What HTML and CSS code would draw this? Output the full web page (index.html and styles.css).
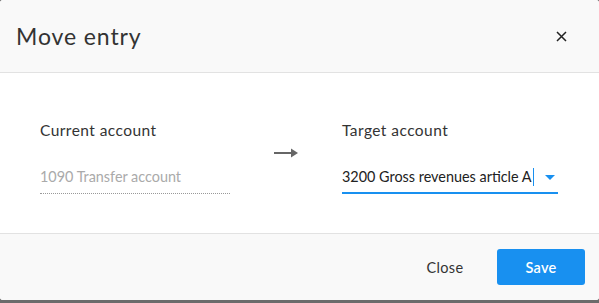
FILE: index.html
```html
<!DOCTYPE html>
<html>
<head>
<meta charset="utf-8">
<link rel="stylesheet" href="styles.css">
</head>
<body>
<div class="dialog">
  <div class="header">
    <div class="title">Move entry</div>
    <button class="close-x" aria-label="Close">
      <svg width="11" height="11" viewBox="0 0 11 11"><path d="M1 1L10 10M10 1L1 10" stroke="#222" stroke-width="1.5" fill="none"/></svg>
    </button>
  </div>
  <div class="body">
    <div class="col col-left">
      <div class="label">Current account</div>
      <div class="value readonly">1090 Transfer account</div>
    </div>
    <div class="arrow">
      <svg width="24" height="10" viewBox="0 0 24 10"><path d="M0 5H18" stroke="#666" stroke-width="2"/><path d="M17 0.5L24 5L17 9.5Z" fill="#666"/></svg>
    </div>
    <div class="col col-right">
      <div class="label">Target account</div>
      <div class="value select"><span class="text">3200 Gross revenues article A</span><span class="caret"></span><span class="tri"></span></div>
    </div>
  </div>
  <div class="footer">
    <button class="btn btn-close">Close</button>
    <button class="btn btn-save">Save</button>
  </div>
</div>
</body>
</html>
```
FILE: styles.css
```css
html, body { margin: 0; padding: 0; }
body {
  background: #6b6b6b;
  font-family: Lato, "Noto Sans", sans-serif;
  color: #333;
  width: 599px;
  height: 303px;
  overflow: hidden;
}
.dialog {
  width: 599px;
  height: 300px;
  background: #fff;
  border-radius: 3px;
  overflow: hidden;
  display: flex;
  flex-direction: column;
}
.header {
  height: 72px;
  background: #f9f9f9;
  border-bottom: 1px solid #e2e2e2;
  display: flex;
  align-items: center;
  justify-content: space-between;
  padding: 0 32px 0 16px;
}
.title {
  font-size: 23px;
  color: #333;
  letter-spacing: 0.9px;
  padding-bottom: 1px;
}
.close-x {
  border: 0;
  background: none;
  padding: 0;
  width: 11px;
  height: 11px;
  display: flex;
}
.body {
  height: 160px;
  display: flex;
  padding: 0 41px 0 40px;
  box-sizing: border-box;
}
.col { display: flex; flex-direction: column; padding-top: 47px; }
.col-left { width: 190px; }
.col-right { width: 216px; }
.label { font-size: 15.5px; line-height: 20px; color: #333; letter-spacing: 0.45px; white-space: nowrap; }
.value {
  margin-top: 27px;
  font-size: 14.4px;
  line-height: 20px;
  box-sizing: border-box;
  display: flex;
  align-items: flex-start;
  letter-spacing: 0;
  white-space: nowrap;
}
.readonly { color: #aaa; border-bottom: 1px dotted #999; height: 27px; }
.select { border-bottom: 2px solid #1890f0; color: #222; height: 27px; }
.text { flex-shrink: 0; }
.caret { flex-shrink: 0; width: 1px; height: 18px; background: #1890f0; margin-left: 1px; margin-top: 1px; }
.tri {
  flex-shrink: 0;
  width: 0; height: 0;
  border-left: 5px solid transparent;
  border-right: 5px solid transparent;
  border-top: 5px solid #1890f0;
  margin-left: 11px;
  margin-top: 8px;
}
.arrow {
  flex: 1;
  display: flex;
  justify-content: center;
  align-items: flex-start;
  padding-top: 75px;
}
.footer {
  flex: 1;
  background: #f9f9f9;
  border-top: 1px solid #e2e2e2;
  display: flex;
  justify-content: flex-end;
  align-items: center;
  padding: 0 14px 0 0;
  gap: 8px;
}
.btn {
  width: 88px;
  height: 36px;
  border: 0;
  border-radius: 3px;
  font-family: Lato, "Noto Sans", sans-serif;
  font-size: 14.5px;
  letter-spacing: 0.3px;
  cursor: pointer;
}
.btn-close { background: transparent; color: #333; }
.btn-save { background: #1890f0; color: #fff; font-weight: 600; }
```
